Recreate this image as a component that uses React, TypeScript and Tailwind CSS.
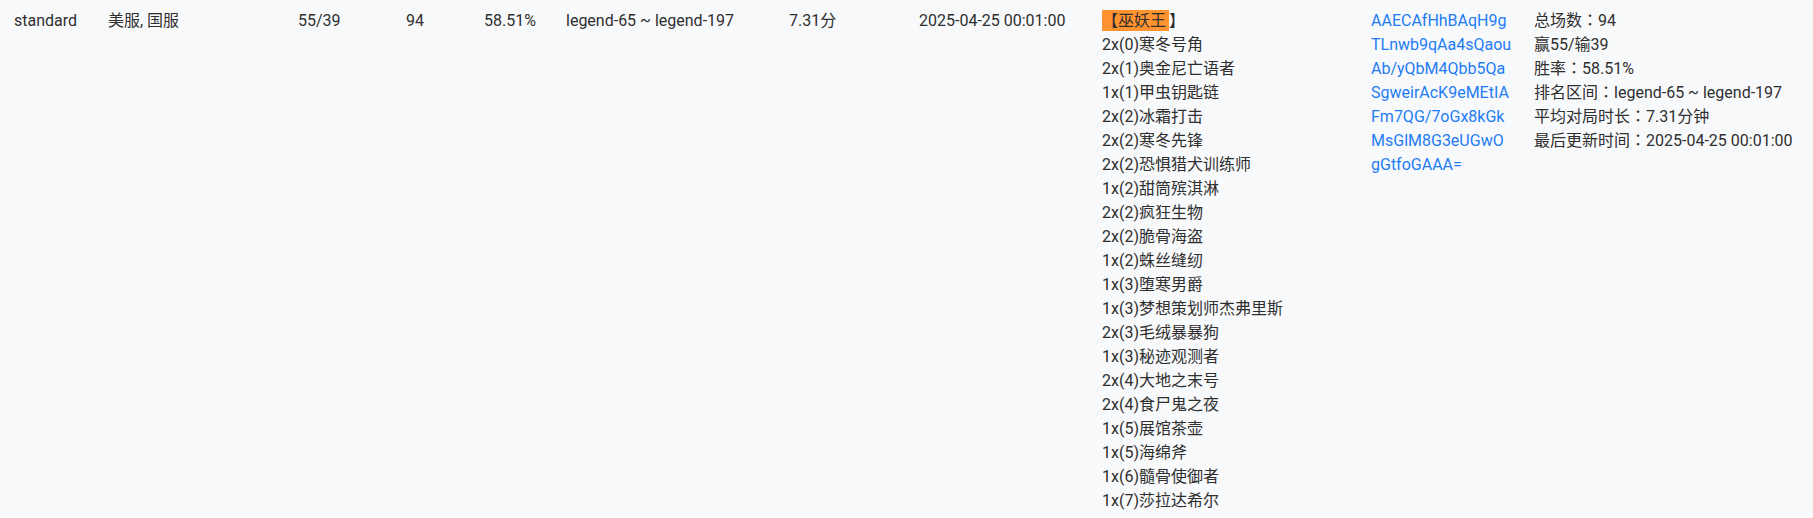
import React from "react";

const cards = [
  "2x(0)寒冬号角",
  "2x(1)奥金尼亡语者",
  "1x(1)甲虫钥匙链",
  "2x(2)冰霜打击",
  "2x(2)寒冬先锋",
  "2x(2)恐惧猎犬训练师",
  "1x(2)甜筒殡淇淋",
  "2x(2)疯狂生物",
  "2x(2)脆骨海盗",
  "1x(2)蛛丝缝纫",
  "1x(3)堕寒男爵",
  "1x(3)梦想策划师杰弗里斯",
  "2x(3)毛绒暴暴狗",
  "1x(3)秘迹观测者",
  "2x(4)大地之末号",
  "2x(4)食尸鬼之夜",
  "1x(5)展馆茶壶",
  "1x(5)海绵斧",
  "1x(6)髓骨使御者",
  "1x(7)莎拉达希尔",
];

const code = [
  "AAECAfHhBAqH9g",
  "TLnwb9qAa4sQaou",
  "Ab/yQbM4Qbb5Qa",
  "SgweirAcK9eMEtIA",
  "Fm7QG/7oGx8kGk",
  "MsGlM8G3eUGwO",
  "gGtfoGAAA=",
];

const stats: [string, string | null, string][] = [
  ["总场数", "：", "94"],
  ["赢55/输39", null, ""],
  ["胜率", "：", "58.51%"],
  ["排名区间", "：", "legend-65 ~ legend-197"],
  ["平均对局时长", "：", "7.31分钟"],
  ["最后更新时间", "：", "2025-04-25 00:01:00"],
];

function P({ children }: { children: React.ReactNode }) {
  return (
    <span
      className="leading-none"
      style={{ fontFamily: '"Noto Sans CJK TC", "Noto Sans CJK SC", sans-serif' }}
    >
      {children}
    </span>
  );
}

export default function App() {
  return (
    <div
      className="min-h-screen w-full bg-[#f8f9fb] text-[#2f2f2f] text-[16px] leading-6"
      style={{ fontFamily: 'Roboto, "Noto Sans CJK SC", sans-serif' }}
    >
      <div className="flex items-start pl-[14px] pt-[9px]">
        <div className="w-[94px] shrink-0 h-6">standard</div>
        <div className="w-[190px] shrink-0 h-6">美服, 国服</div>
        <div className="w-[108px] shrink-0 h-6">55/39</div>
        <div className="w-[78px] shrink-0 h-6">94</div>
        <div className="w-[82px] shrink-0 h-6">58.51%</div>
        <div className="w-[223px] shrink-0 h-6">legend-65 ~ legend-197</div>
        <div className="w-[130px] shrink-0 h-6">7.31分</div>
        <div className="w-[183px] shrink-0 h-6">2025-04-25 00:01:00</div>
        <div className="w-[269px] shrink-0 flex flex-col">
          <div className="h-6">
            <span className="inline-block h-[21px] leading-[21px] bg-[#ff9330] pr-[3px]">
              <P>【</P>巫妖王
            </span>
            <P>】</P>
          </div>
          {cards.map((c) => (
            <div key={c} className="h-6">
              {c}
            </div>
          ))}
        </div>
        <div className="w-[163px] shrink-0 flex flex-col text-[#1f7cf5]">
          {code.map((c) => (
            <div key={c} className="h-6">
              {c}
            </div>
          ))}
        </div>
        <div className="flex-1 flex flex-col">
          {stats.map(([a, b, c]) => (
            <div key={a} className="h-6">
              {a}
              {b ? <P>{b}</P> : null}
              {c}
            </div>
          ))}
        </div>
      </div>
    </div>
  );
}
